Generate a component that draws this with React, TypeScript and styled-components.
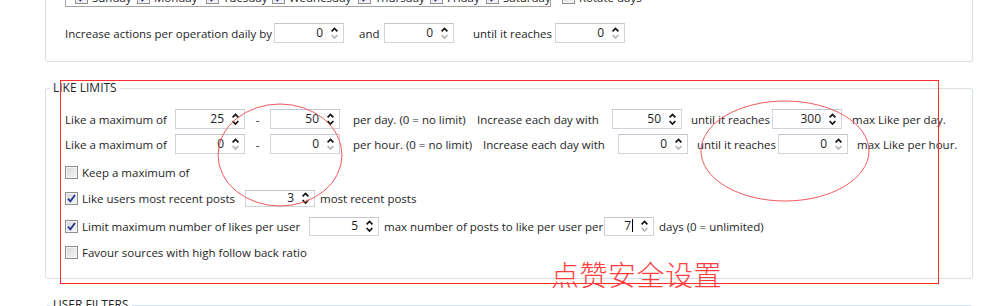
import React from "react";
import styled, { createGlobalStyle } from "styled-components";

const GlobalStyle = createGlobalStyle`
  html, body {
    margin: 0;
    padding: 0;
    background: #fff;
  }
  body {
    font-family: "Open Sans", "Segoe UI", Arial, sans-serif;
    font-size: 11.5px;
    color: #1e1e1e;
  }
`;

const Viewport = styled.div`
  position: relative;
  width: 988px;
  height: 306px;
  overflow: hidden;
  background: #fff;
`;

const TopGroup = styled.div`
  display: flex;
  flex-direction: column;
  box-sizing: border-box;
  height: 62px;
  margin: 0 15px 0 45px;
  padding-left: 19px;
  border: 1px solid #d5dfe5;
  border-top: none;
  border-radius: 0 0 3px 3px;
`;

const DaysLine = styled.div`
  display: flex;
  align-items: center;
  height: 19px;
  margin-top: -12px;
`;

const DaysBox = styled.div`
  display: flex;
  align-items: center;
  box-sizing: border-box;
  width: 486px;
  height: 19px;
  padding-left: 9px;
  border: 1px solid #a3a3a3;
`;

const CheckItem = styled.label<{ $w?: number; $ml?: number }>`
  display: flex;
  align-items: center;
  gap: 4px;
  flex-shrink: 0;
  white-space: nowrap;
  width: ${(p) => (p.$w ? `${p.$w}px` : "auto")};
  margin-left: ${(p) => p.$ml || 0}px;
`;

const Box = styled.span`
  box-sizing: border-box;
  display: flex;
  align-items: center;
  justify-content: center;
  width: 13px;
  height: 13px;
  flex-shrink: 0;
  border: 1px solid #8e8f8f;
  background: linear-gradient(135deg, #d6d6d6 0%, #f7f7f7 100%);
  box-shadow: inset 0 0 0 1px #f4f4f4;
`;

const Row = styled.div<{ $h?: number; $mt?: number }>`
  display: flex;
  align-items: center;
  height: ${(p) => p.$h || 20}px;
  margin-top: ${(p) => p.$mt || 0}px;
`;

const Text = styled.span<{ $w?: number; $ml?: number; $center?: boolean }>`
  flex-shrink: 0;
  white-space: nowrap;
  width: ${(p) => (p.$w ? `${p.$w}px` : "auto")};
  margin-left: ${(p) => p.$ml || 0}px;
  text-align: ${(p) => (p.$center ? "center" : "left")};
`;

const SpinBox = styled.div<{ $w: number; $h: number }>`
  display: flex;
  align-items: center;
  box-sizing: border-box;
  flex-shrink: 0;
  width: ${(p) => p.$w}px;
  height: ${(p) => p.$h}px;
  padding-right: 5px;
  border: 1px solid #d0d4da;
  border-top-color: #c3c8cf;
  background: #fff;
`;

const SpinValue = styled.span`
  flex: 1;
  text-align: right;
  margin-right: 8px;
  font-size: 12px;
  line-height: 16px;
`;

const Caret = styled.span`
  display: inline-block;
  width: 1px;
  height: 13px;
  margin-left: 1px;
  background: #000;
  vertical-align: -2px;
`;

const Group = styled.fieldset<{ $mt?: number }>`
  min-width: 0;
  margin: ${(p) => p.$mt || 18}px 15px 0 45px;
  padding: 13px 0 16px 19px;
  border: 1px solid #d5dfe5;
  border-radius: 3px;
`;

const Legend = styled.legend`
  margin-left: -15px;
  padding: 0 3px;
  line-height: 16px;
  font-size: 12px;
  color: #262626;
`;

const RedFrame = styled.div`
  position: absolute;
  left: 60px;
  top: 80px;
  width: 879px;
  height: 204px;
  box-sizing: border-box;
  border: 1px solid #ff2e2e;
  pointer-events: none;
`;

const Marks = styled.svg`
  position: absolute;
  left: 0;
  top: 0;
  pointer-events: none;
`;

const Note = styled.div`
  position: absolute;
  left: 551px;
  top: 260px;
  font-family: "Noto Sans CJK SC", "Noto Sans", sans-serif;
  font-size: 28px;
  font-weight: 300;
  line-height: 28px;
  letter-spacing: 0.5px;
  color: #ff3d3d;
  pointer-events: none;
`;

const Arrows = ({ downOff }: { downOff?: boolean }) => (
  <svg width="7" height="18" viewBox="0 0 7 18" style={{ flexShrink: 0 }}>
    <polyline points="0.6,7.4 3.5,4.4 6.4,7.4" fill="none" stroke="#111" strokeWidth="1.7" />
    <polyline
      points="0.6,11 3.5,14 6.4,11"
      fill="none"
      stroke={downOff ? "#b4b4b4" : "#111"}
      strokeWidth="1.7"
    />
  </svg>
);

type SpinProps = { value: string; w?: number; h?: number; downOff?: boolean; caret?: boolean };

const Spinner = ({ value, w = 70, h = 20, downOff, caret }: SpinProps) => (
  <SpinBox $w={w} $h={h}>
    <SpinValue>
      {value}
      {caret && <Caret />}
    </SpinValue>
    <Arrows downOff={downOff} />
  </SpinBox>
);

const Check = ({ on }: { on?: boolean }) => (
  <Box>
    {on && (
      <svg width="9" height="9" viewBox="0 0 9 9">
        <path d="M1 4.6 L3.4 7.4 L8 1" fill="none" stroke="#26339a" strokeWidth="1.8" />
      </svg>
    )}
  </Box>
);

const days: [string, number][] = [
  ["Sunday", 62],
  ["Monday", 69],
  ["Tuesday", 66],
  ["Wednesday", 86],
  ["Thursday", 72],
  ["Friday", 56],
  ["Saturday", 60],
];

export default function App() {
  return (
    <>
      <GlobalStyle />
      <Viewport>
        <TopGroup>
          <DaysLine>
            <DaysBox>
              {days.map(([d, w]) => (
                <CheckItem key={d} $w={w}>
                  <Check on />
                  {d}
                </CheckItem>
              ))}
            </DaysBox>
            <CheckItem $ml={11}>
              <Check />
              Rotate days
            </CheckItem>
          </DaysLine>
          <Row $mt={16}>
            <Text $w={209}>Increase actions per operation daily by</Text>
            <Spinner value="0" downOff />
            <Text $ml={15} $w={25}>and</Text>
            <Spinner value="0" downOff />
            <Text $ml={19} $w={82}>until it reaches</Text>
            <Spinner value="0" downOff />
          </Row>
        </TopGroup>

        <Group>
          <Legend>LIKE LIMITS</Legend>
          <Row>
            <Text $w={110}>Like a maximum of</Text>
            <Spinner value="25" />
            <Text $w={25} $center>-</Text>
            <Spinner value="50" />
            <Text $ml={13} $w={124}>per day. (0 = no limit)</Text>
            <Text $w={135}>Increase each day with</Text>
            <Spinner value="50" />
            <Text $ml={9} $w={81}>until it reaches</Text>
            <Spinner value="300" />
            <Text $ml={10}>max Like per day.</Text>
          </Row>
          <Row $mt={5}>
            <Text $w={110}>Like a maximum of</Text>
            <Spinner value="0" downOff />
            <Text $w={25} $center>-</Text>
            <Spinner value="0" downOff />
            <Text $ml={13} $w={130}>per hour. (0 = no limit)</Text>
            <Text $w={135}>Increase each day with</Text>
            <Spinner value="0" downOff />
            <Text $ml={9} $w={81}>until it reaches</Text>
            <Spinner value="0" downOff />
            <Text $ml={9}>max Like per hour.</Text>
          </Row>
          <Row $mt={8}>
            <CheckItem>
              <Check />
              Keep a maximum of
            </CheckItem>
          </Row>
          <Row $mt={6}>
            <CheckItem $w={180}>
              <Check on />
              Like users most recent posts
            </CheckItem>
            <Spinner value="3" h={17} />
            <Text $ml={5}>most recent posts</Text>
          </Row>
          <Row $mt={8}>
            <CheckItem $w={244}>
              <Check on />
              Limit maximum number of likes per user
            </CheckItem>
            <Spinner value="5" h={19} />
            <Text $ml={5} $w={220}>max number of posts to like per user per</Text>
            <Spinner value="7" w={50} h={19} downOff caret />
            <Text $ml={5}>days (0 = unlimited)</Text>
          </Row>
          <Row $mt={6}>
            <CheckItem>
              <Check />
              Favour sources with high follow back ratio
            </CheckItem>
          </Row>
        </Group>

        <Group>
          <Legend>USER FILTERS</Legend>
          <Row />
        </Group>

        <RedFrame />
        <Marks width="988" height="306" viewBox="0 0 988 306">
          <ellipse cx="280" cy="155" rx="62" ry="51" fill="none" stroke="#f0595e" strokeWidth="1" />
          <ellipse cx="785" cy="151" rx="84" ry="50" fill="none" stroke="#f0595e" strokeWidth="1" />
        </Marks>
        <Note>点赞安全设置</Note>
      </Viewport>
    </>
  );
}
